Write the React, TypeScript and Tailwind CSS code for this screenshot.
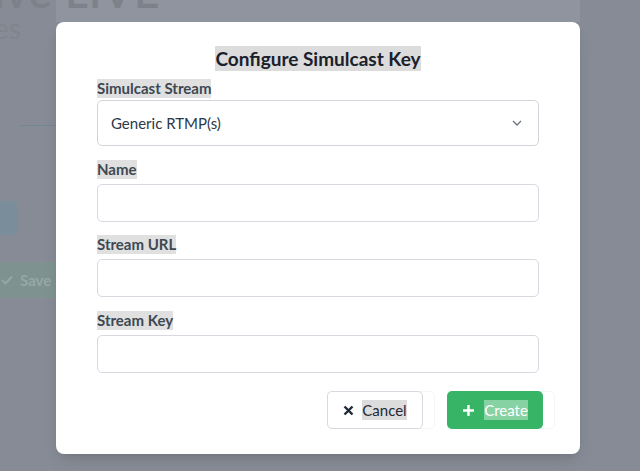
import React from 'react';

const Label = ({ children }: { children: React.ReactNode }) => (
  <div className="flex">
    <span className="inline-block bg-[#e0e0e0] text-[15px] font-bold leading-[19px] text-[#3d4852]">
      {children}
    </span>
  </div>
);

const Field = ({ label, className = '' }: { label: string; className?: string }) => (
  <div className={`flex flex-col ${className}`}>
    <Label>{label}</Label>
    <input className="mt-[5px] h-[38px] w-full rounded-[5px] border border-[#d6d9e0] bg-white px-3 text-[15px] outline-none" />
  </div>
);

export default function App() {
  return (
    <div
      className="relative h-[471px] w-[640px] overflow-hidden bg-[#888c96]"
      style={{ fontFamily: 'Lato, "Noto Sans", sans-serif' }}
    >
      {/* page behind the dimmed overlay */}
      <div className="flex h-full">
        <div className="flex w-[56px] flex-col bg-[#878b95]">
          <div className="h-[125px]" />
          <div className="ml-[20px] h-[1px] bg-[#738696]" />
          <div className="h-[75px]" />
          <div className="h-[34px] w-[17px] rounded-r-[4px] bg-[#7a8d9b]" />
          <div className="h-[27px]" />
          <div className="flex h-[36px] items-center gap-[7px] bg-[#7e928f] pl-[1px] text-[15px] font-bold text-[#97a7a4]">
            <svg width="12" height="10" viewBox="0 0 12 10" fill="none">
              <path d="M1 5l3.5 3.5L11 1.5" stroke="#97a7a4" strokeWidth="2" />
            </svg>
            <span>Save</span>
          </div>
        </div>
        <div className="flex w-[524px] flex-col">
          <div className="h-[22px] bg-[#8f949e]" />
          <div className="flex-1 bg-[#888c96]" />
        </div>
        <div className="flex-1 bg-[#878b95]" />
      </div>
      <div className="absolute left-[-38px] top-[-31px] text-[44px] font-semibold leading-none tracking-wide text-[#7c818a]">
        save LIVE
      </div>
      <div className="absolute left-[-6px] top-[14px] text-[28px] leading-none text-[#80858e]">es</div>

      {/* modal */}
      <div className="absolute inset-0 pl-[56px] pt-[22px]">
        <div className="flex h-[432px] w-[524px] flex-col rounded-[8px] bg-white px-[41px] pt-[24px] shadow-lg">
          <div className="flex justify-center">
            <h2 className="inline-block bg-[#dcdcdc] text-[19px] font-bold leading-[25px] text-[#1a202c]">
              Configure Simulcast Key
            </h2>
          </div>
          <div className="mt-[8px] flex flex-col">
            <Label>Simulcast Stream</Label>
            <div className="mt-[2px] flex h-[46px] items-center justify-between rounded-[5px] border border-[#d2d6dc] pl-[13px] pr-[16px] text-[15px] text-[#2d3748]">
              <span>Generic RTMP(s)</span>
              <svg width="10" height="6" viewBox="0 0 10 6" fill="none">
                <path d="M1 1l4 4 4-4" stroke="#6b7280" strokeWidth="1.3" />
              </svg>
            </div>
          </div>
          <div className="mt-[14px] flex flex-col">
            <Field label="Name" />
            <Field label="Stream URL" className="mt-[13px]" />
            <Field label="Stream Key" className="mt-[14px]" />
          </div>
          <div className="mt-[18px] flex justify-end gap-[12px]">
            <div className="rounded-[5px] border border-[#f4f5f7] pr-[12px]">
              <button className="-m-px flex h-[38px] w-[96px] items-center justify-center gap-[8px] rounded-[5px] border border-[#d6d9e0] bg-white text-[15px] text-[#1f2937]">
                <svg width="11" height="11" viewBox="0 0 11 11" fill="none">
                  <path d="M1.5 1.5l8 8M9.5 1.5l-8 8" stroke="#1f2937" strokeWidth="2.4" />
                </svg>
                <span className="bg-[#dcdcdc] leading-[20px]">Cancel</span>
              </button>
            </div>
            <div className="-mr-[16px] rounded-[5px] border border-[#f4f5f7] pr-[12px]">
              <button className="-m-px flex h-[38px] w-[96px] items-center justify-center gap-[9px] rounded-[5px] bg-[#38b466] text-[15px] text-white">
                <svg width="13" height="13" viewBox="0 0 13 13" fill="none">
                  <path d="M6.5 1v11M1 6.5h11" stroke="white" strokeWidth="2.4" />
                </svg>
                <span className="bg-white/40 leading-[20px]">Create</span>
              </button>
            </div>
          </div>
        </div>
      </div>
    </div>
  );
}
